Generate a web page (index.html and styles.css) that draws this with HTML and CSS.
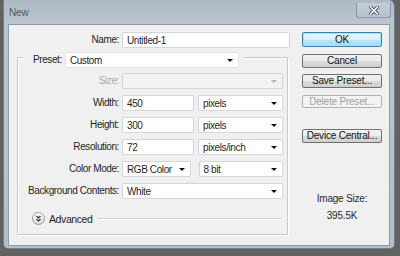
FILE: index.html
```html
<!DOCTYPE html>
<html>
<head>
<meta charset="utf-8">
<link rel="stylesheet" href="styles.css">
</head>
<body>
<div class="window">
  <div class="titlebar">
    <span class="title">New</span>
    <div class="close">
      <svg width="10" height="9" viewBox="0 0 10 9"><path d="M1.5 1 L8.5 8 M8.5 1 L1.5 8" stroke="#3a4450" stroke-width="3.2" stroke-linecap="square"/><path d="M1.5 1 L8.5 8 M8.5 1 L1.5 8" stroke="#ffffff" stroke-width="1.6" stroke-linecap="square"/></svg>
    </div>
  </div>
  <div class="panel">
    <div class="form">
      <div class="name-row">
        <span class="lbl name-lbl">Name:</span>
        <div class="field name-field">Untitled-1</div>
      </div>
      <div class="group">
        <div class="legend">
          <span class="lbl">Preset:</span>
          <div class="field select preset">Custom<span class="arrow"></span></div>
        </div>
        <div class="grid">
          <span class="lbl disabled">Size:</span>
          <div class="field select full disabled-field"><span class="arrow grey"></span></div>

          <span class="lbl">Width:</span>
          <div class="pair"><div class="field num">450</div><div class="field select unit">pixels<span class="arrow"></span></div></div>

          <span class="lbl">Height:</span>
          <div class="pair"><div class="field num">300</div><div class="field select unit">pixels<span class="arrow"></span></div></div>

          <span class="lbl">Resolution:</span>
          <div class="pair"><div class="field num">72</div><div class="field select unit">pixels/inch<span class="arrow"></span></div></div>

          <span class="lbl">Color Mode:</span>
          <div class="pair wide-gap"><div class="field select mode">RGB Color<span class="arrow"></span></div><div class="field select unit">8 bit<span class="arrow"></span></div></div>

          <span class="lbl">Background Contents:</span>
          <div class="field select full">White<span class="arrow"></span></div>
        </div>
        <div class="advanced">
          <span class="adv-icon">
            <svg width="13" height="13" viewBox="0 0 13 13"><defs><linearGradient id="g" x1="0" y1="0" x2="0" y2="1"><stop offset="0" stop-color="#ffffff"/><stop offset="1" stop-color="#d8d8d8"/></linearGradient></defs><circle cx="6.5" cy="6.5" r="6" fill="url(#g)" stroke="#9a9a9a"/><path d="M4.5 4 L6.5 6 L8.5 4 M4.5 7 L6.5 9 L8.5 7" fill="none" stroke="#333" stroke-width="1.2"/></svg>
          </span>
          <span class="adv-text">Advanced</span>
          <span class="adv-rule"></span>
        </div>
      </div>
    </div>
    <div class="side">
      <div class="btn ok">OK</div>
      <div class="btn b-cancel">Cancel</div>
      <div class="btn b-save">Save Preset...</div>
      <div class="btn b-delete disabled-btn">Delete Preset...</div>
      <div class="btn b-device">Device Central...</div>
      <div class="imgsize">
        <div>Image Size:</div>
        <div>395.5K</div>
      </div>
    </div>
  </div>
</div>
</body>
</html>
```

FILE: styles.css
```css
* { box-sizing: border-box; }
html, body { margin: 0; padding: 0; }
body {
  width: 400px;
  height: 256px;
  background: #626262;
  font-family: "Liberation Sans", Arial, sans-serif;
  font-size: 10px;
  letter-spacing: -0.4px;
  color: #1f1f1f;
  overflow: hidden;
}
.window {
  margin-left: 3px;
  width: 392px;
  height: 249px;
  background: linear-gradient(to bottom, #aeb9c5 0px, #bac5d0 24px, #b3bfcb 100%);
  border: 1px solid #6f7c8a;
  border-top: none;
  border-radius: 0 6px 5px 5px;
  display: flex;
  flex-direction: column;
}
.titlebar {
  height: 24px;
  display: flex;
  align-items: flex-start;
  justify-content: space-between;
  padding-left: 5px;
}
.title {
  margin-top: 7px;
  font-size: 10px;
  color: #4b5663;
  letter-spacing: -0.2px;
}
.close {
  margin-top: 3px;
  margin-right: 3px;
  width: 35px;
  height: 15px;
  border: 1px solid #8796a6;
  border-top: none;
  border-radius: 0 0 3px 3px;
  background: linear-gradient(to bottom, #c5ced8, #b6c1cc);
  display: flex;
  align-items: center;
  justify-content: center;
}
.panel {
  margin: 0 4px 0 4px;
  height: 222px;
  background: #f0f0f0;
  border: 1px solid #8c99a7;
  display: flex;
  padding-top: 7px;
}
.form {
  width: 281px;
}
.lbl {
  text-align: right;
  white-space: nowrap;
  line-height: 16px;
}
.disabled { color: #a8a8a8; }
.name-row {
  display: flex;
  height: 16px;
}
.name-lbl {
  width: 107px;
  margin-right: 3px;
  margin-left: 3px;
}
.field {
  height: 16px;
  line-height: 15px;
  background: #ffffff;
  border: 1px solid #d6d6d6;
  border-radius: 1px;
  padding-left: 4px;
  white-space: nowrap;
  position: relative;
}
.name-field { width: 168px; }
.group {
  margin-top: 9px;
  margin-left: 8px;
  width: 271px;
  height: 178px;
  border: 1px solid #c9c9c9;
  border-top-color: #c4c4c4;
  box-shadow: inset 1px 1px 0 #ffffff, 1px 1px 0 #ffffff;
}
.legend {
  margin-top: -6px;
  margin-left: 5px;
  width: 221px;
  display: flex;
  background: #f0f0f0;
  padding-left: 10px;
  padding-right: 4px;
  gap: 3px;
}
.preset { width: 174px; border-color: #e4e4e4; }
.select { padding-right: 14px; }
.arrow {
  position: absolute;
  right: 5px;
  top: 6px;
  width: 0;
  height: 0;
  border-left: 3px solid transparent;
  border-right: 3px solid transparent;
  border-top: 3px solid #111;
}
.arrow.grey { border-top-color: #b8b8b8; }
.grid {
  margin-top: 5px;
  display: grid;
  grid-template-columns: 101px 161px;
  column-gap: 3px;
  row-gap: 6px;
  grid-auto-rows: 16px;
}
.grid > .grid-first { margin-top: 0; }
.full { width: 161px; }
.disabled-field { background: #f2f2f2; border-color: #d4d4d4; }
.pair { display: flex; gap: 4px; }
.pair.wide-gap { gap: 8px; }
.num { width: 72px; }
.unit { width: 85px; }
.mode { width: 69px; }
.advanced {
  margin-top: 13px;
  display: flex;
  align-items: center;
  height: 13px;
  padding-left: 14px;
}
.adv-icon { display: flex; width: 13px; height: 13px; }
.adv-text { margin-left: 4px; margin-right: 5px; font-size: 10.5px; }
.adv-rule {
  width: 183px;
  height: 2px;
  margin-top: 1px;
  background: #cfcfcf;
  border-bottom: 1px solid #ffffff;
}
.side {
  margin-left: 12px;
  width: 80px;
  display: flex;
  flex-direction: column;
}
.btn {
  height: 14px;
  line-height: 12px;
  text-align: center;
  border: 1px solid #707070;
  border-radius: 2px;
  background: linear-gradient(to bottom, #f2f2f2 0%, #ebebeb 50%, #dddddd 51%, #cfcfcf 100%);
  color: #111;
  letter-spacing: -0.2px;
}
.ok {
  height: 15px;
  line-height: 13px;
  border-color: #3c7fb1;
  background: linear-gradient(to bottom, #eaf6fd 0%, #d9f0fc 50%, #bee6fd 51%, #a7d9f5 100%);
  box-shadow: inset 0 0 0 1px #9fe4fd;
}
.b-cancel { margin-top: 7px; }
.b-save { margin-top: 6px; }
.b-delete {
  margin-top: 7px;
  height: 13px;
  line-height: 11px;
  color: #a0a0a0;
  border-color: #adb2b5;
  background: #f4f4f4;
}
.b-device { margin-top: 21px; }
.imgsize {
  margin-top: 47px;
  text-align: center;
  line-height: 17px;
  color: #2a2a2a;
  letter-spacing: -0.2px;
}
```
